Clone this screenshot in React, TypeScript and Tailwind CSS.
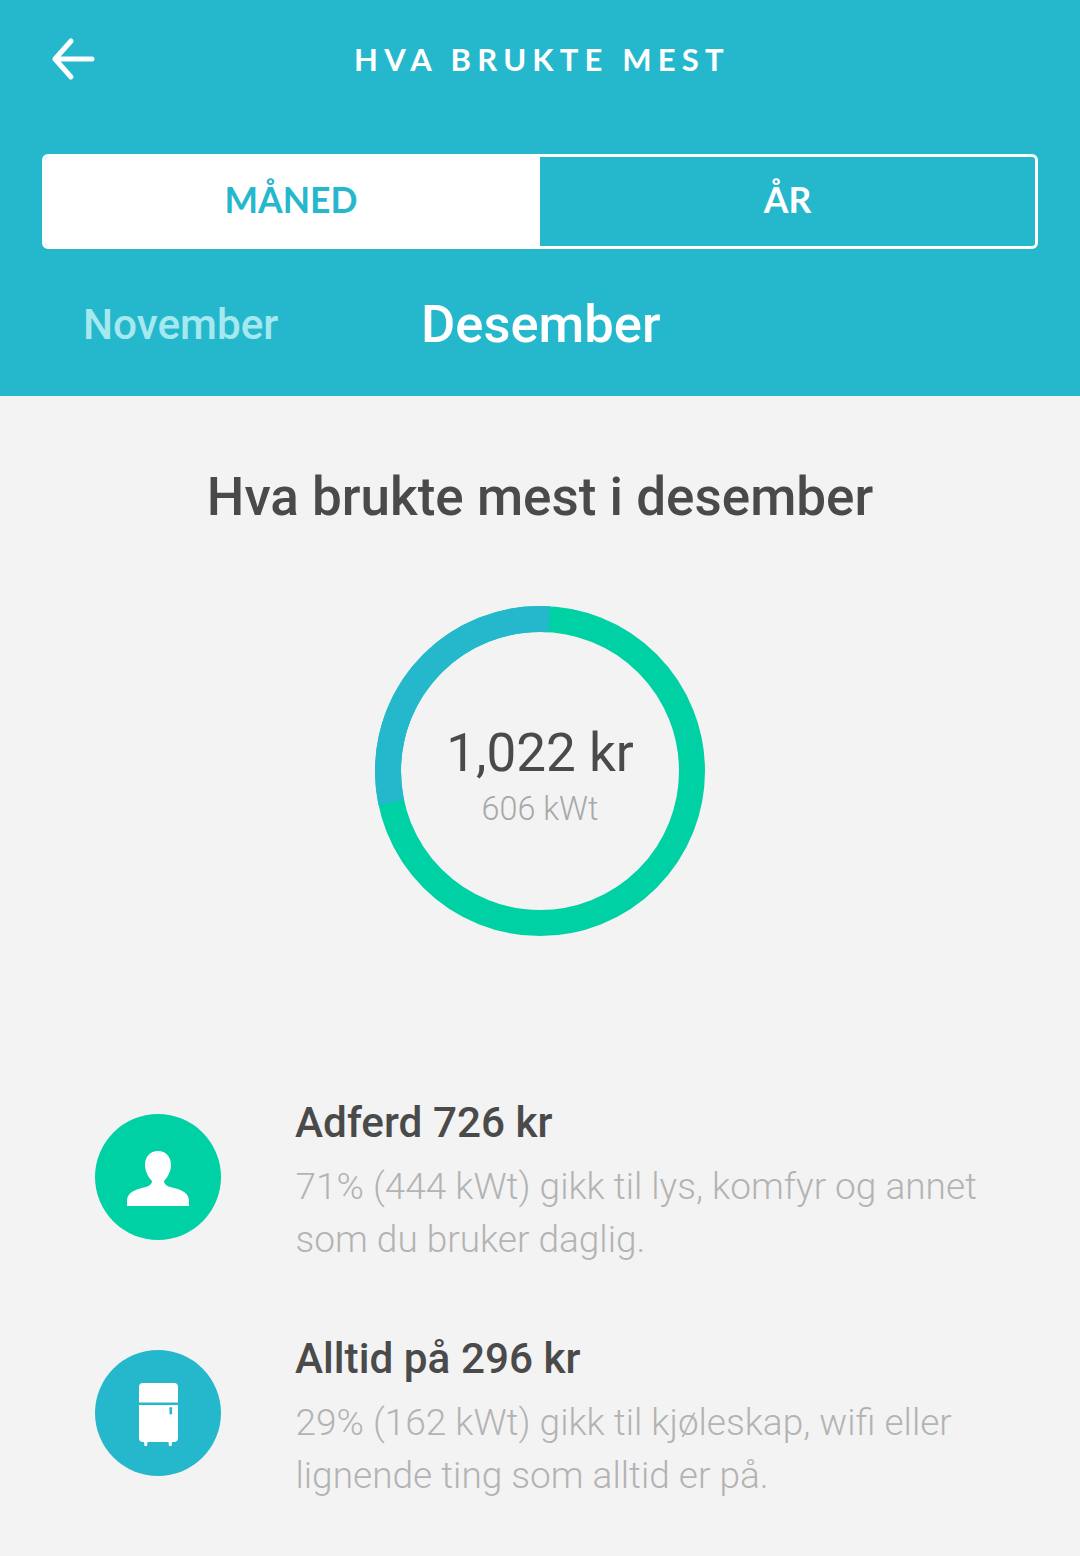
export default function App() {
  const green = "#00d1a4";
  const blue = "#25b8cd";
  const cx = 165;
  const cy = 165;
  const r = 152;
  const arc = (fromDeg: number, toDeg: number) => {
    const p = (d: number) => {
      const a = ((d - 90) * Math.PI) / 180;
      return `${cx + r * Math.cos(a)} ${cy + r * Math.sin(a)}`;
    };
    return `M ${p(fromDeg)} A ${r} ${r} 0 ${toDeg - fromDeg > 180 ? 1 : 0} 1 ${p(toDeg)}`;
  };

  return (
    <div className="w-[1080px] h-[1556px] bg-[#f3f3f3] overflow-hidden font-['Roboto',sans-serif]">
      <header className="h-[396px] bg-[#25b8cd] px-[42px] text-white flex flex-col">
        <div className="h-[154px] pt-[37px] relative">
          <svg className="absolute left-[8px] top-[36px]" width="46" height="46" viewBox="0 0 46 46" fill="none" stroke="white" strokeWidth="5" strokeLinecap="round" strokeLinejoin="round">
            <path d="M5 23 H42 M21 5 L5 23 L21 41" />
          </svg>
          <div className="pl-[4px] text-center text-[31px] leading-[44px] font-bold tracking-[6.2px] font-['Lato',sans-serif]">HVA BRUKTE MEST</div>
        </div>
        <div className="h-[95px] flex rounded-[6px] border-[3px] border-white overflow-hidden font-['Lato',sans-serif] font-bold text-[35.5px]">
          <div className="w-1/2 pb-[3px] pr-[3px] bg-white text-[#25b8cd] flex items-center justify-center">MÅNED</div>
          <div className="w-1/2 pb-[3px] flex items-center justify-center">ÅR</div>
        </div>
        <div className="relative flex-1">
          <span className="absolute left-[41px] top-[51px] text-[42.3px] leading-[50px] font-medium text-[#a5e8ef]">November</span>
          <span className="absolute left-[379px] top-[45px] text-[52.5px] leading-[60px] font-medium">Desember</span>
        </div>
      </header>

      <h1 className="mt-[68px] text-center text-[53px] leading-[66px] font-medium text-[#4a4a4a]">Hva brukte mest i desember</h1>

      <div className="relative mx-auto mt-[76px] w-[330px] h-[330px]">
        <svg width="330" height="330" viewBox="0 0 330 330" fill="none" strokeWidth="26">
          <circle cx={cx} cy={cy} r={r} stroke={green} />
          <path d={arc(258, 363.5)} stroke={blue} />
        </svg>
        <div className="absolute inset-0 flex flex-col items-center pt-[117px]">
          <span className="text-[53px] leading-[60px] text-[#4a4a4a]">1,022 kr</span>
          <span className="mt-[6px] text-[32.3px] leading-[40px] font-light text-[#a8a8a8]">606 kWt</span>
        </div>
      </div>

      <div className="mt-[159px] px-[95px] flex flex-col gap-[54px]">
        <Row
          color={green}
          title="Adferd 726 kr"
          line1="71% (444 kWt) gikk til lys, komfyr og annet"
          line2="som du bruker daglig."
          icon={
            <svg width="62" height="55" viewBox="0 0 62 55" fill="white">
              <path d="M31 0 C39 0 44 6 44 14 C44 21 40 27 37 30 C37 34 42 36 47 37 C55 39 62 42 62 50 V55 H0 V50 C0 42 7 39 15 37 C20 36 25 34 25 30 C22 27 18 21 18 14 C18 6 23 0 31 0 Z" />
            </svg>
          }
        />
        <Row
          color={blue}
          title="Alltid på 296 kr"
          line1="29% (162 kWt) gikk til kjøleskap, wifi eller"
          line2="lignende ting som alltid er på."
          icon={
            <svg width="39" height="63" viewBox="0 0 39 63" fill="white">
              <path d="M4 0 H35 Q39 0 39 4 V19.5 H0 V4 Q0 0 4 0 Z" />
              <path d="M0 22 H39 V55 Q39 59 35 59 H33 L32.5 63 H30 L29.5 59 H8.5 L8 63 H5.5 L5 59 H4 Q0 59 0 55 Z" />
              <rect x="30.5" y="24" width="2.6" height="7.5" rx="1.3" fill={blue} />
            </svg>
          }
        />
      </div>
    </div>
  );
}

function Row({ color, title, line1, line2, icon }: { color: string; title: string; line1: string; line2: string; icon: React.ReactNode }) {
  return (
    <div className="flex h-[182px]">
      <div className="w-[126px] h-[126px] mt-[19px] pt-[3px] rounded-full flex items-center justify-center shrink-0" style={{ backgroundColor: color }}>
        {icon}
      </div>
      <div className="ml-[74px]">
        <div className="mt-[1px] text-[42.3px] leading-[54px] font-medium text-[#4a4a4a]">{title}</div>
        <div className="mt-[10px] ml-[0.5px] text-[37px] leading-[53px] font-light text-[#b3b3b3] whitespace-nowrap">
          <div>{line1}</div>
          <div>{line2}</div>
        </div>
      </div>
    </div>
  );
}
